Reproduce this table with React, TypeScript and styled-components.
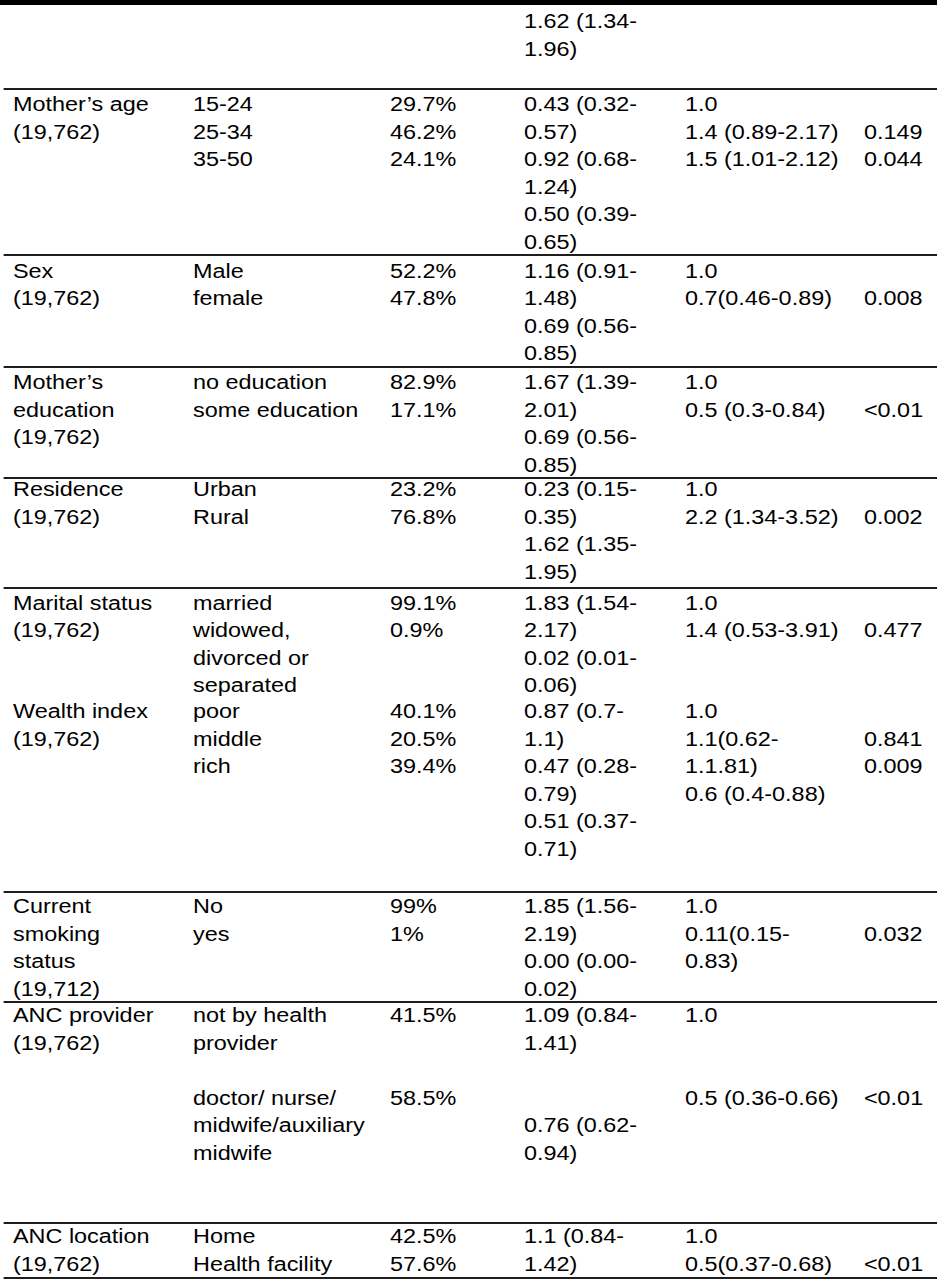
import React from "react";
import styled, { createGlobalStyle } from "styled-components";

const GlobalStyle = createGlobalStyle`
  html, body { margin: 0; padding: 0; background: #fff; }
  body {
    font-family: "Liberation Sans", Arial, Helvetica, sans-serif;
    color: #000;
  }
`;

/* The source table is a horizontally stretched scan: glyphs are wider than tall. */
const SCALE = 1.2;

const Page = styled.div`
  width: 937px;
  height: 1280px;
  overflow: hidden;
  background: #fff;
`;

const Table = styled.div`
  width: ${937 / SCALE}px;
  transform: scaleX(${SCALE});
  transform-origin: 0 0;
  border-top: 5px solid #000;
  font-size: 19.5px;
  line-height: 27.5px;
`;

const Row = styled.div<{ $h: number; $ruled: boolean }>`
  display: grid;
  grid-template-columns: 150px 164.17px 111.67px 134.17px 149.17px 1fr;
  box-sizing: border-box;
  height: ${(p) => p.$h}px;
  margin-left: 2.5px;
  padding-left: 8.33px;
  border-bottom: ${(p) => (p.$ruled ? "2px solid #1e1e1e" : "none")};
`;

const Cell = styled.div<{ $shift: number }>`
  margin-top: ${(p) => p.$shift}px;
  white-space: nowrap;
`;

const Line = styled.div`
  height: 27.5px;
`;

type RowData = {
  h: number;
  pad: number;
  ruled?: boolean;
  cols: string[][];
};

const rows: RowData[] = [
  { h: 85, pad: 3, cols: [[], [], [], ["1.62 (1.34-", "1.96)"], [], []] },
  {
    h: 166,
    pad: 1,
    cols: [
      ["Mother’s age", "(19,762)"],
      ["15-24", "25-34", "35-50"],
      ["29.7%", "46.2%", "24.1%"],
      ["0.43 (0.32-", "0.57)", "0.92 (0.68-", "1.24)", "0.50 (0.39-", "0.65)"],
      ["1.0", "1.4 (0.89-2.17)", "1.5 (1.01-2.12)"],
      ["", "0.149", "0.044"],
    ],
  },
  {
    h: 112,
    pad: 1.5,
    cols: [
      ["Sex", "(19,762)"],
      ["Male", "female"],
      ["52.2%", "47.8%"],
      ["1.16 (0.91-", "1.48)", "0.69 (0.56-", "0.85)"],
      ["1.0", "0.7(0.46-0.89)"],
      ["", "0.008"],
    ],
  },
  {
    h: 111,
    pad: 1,
    cols: [
      ["Mother’s", "education", "(19,762)"],
      ["no education", "some education"],
      ["82.9%", "17.1%"],
      ["1.67 (1.39-", "2.01)", "0.69 (0.56-", "0.85)"],
      ["1.0", "0.5 (0.3-0.84)"],
      ["", "<0.01"],
    ],
  },
  {
    h: 110,
    pad: -3,
    cols: [
      ["Residence", "(19,762)"],
      ["Urban", "Rural"],
      ["23.2%", "76.8%"],
      ["0.23 (0.15-", "0.35)", "1.62 (1.35-", "1.95)"],
      ["1.0", "2.2 (1.34-3.52)"],
      ["", "0.002"],
    ],
  },
  {
    h: 109,
    pad: 0.5,
    ruled: false,
    cols: [
      ["Marital status", "(19,762)"],
      ["married", "widowed,", "divorced or", "separated"],
      ["99.1%", "0.9%"],
      ["1.83 (1.54-", "2.17)", "0.02 (0.01-", "0.06)"],
      ["1.0", "1.4 (0.53-3.91)"],
      ["", "0.477"],
    ],
  },
  {
    h: 195,
    pad: 0,
    cols: [
      ["Wealth index", "(19,762)"],
      ["poor", "middle", "rich"],
      ["40.1%", "20.5%", "39.4%"],
      ["0.87 (0.7-", "1.1)", "0.47 (0.28-", "0.79)", "0.51 (0.37-", "0.71)"],
      ["1.0", "1.1(0.62-", "1.1.81)", "0.6 (0.4-0.88)"],
      ["", "0.841", "0.009"],
    ],
  },
  {
    h: 110,
    pad: 0,
    cols: [
      ["Current", "smoking", "status", "(19,712)"],
      ["No", "yes"],
      ["99%", "1%"],
      ["1.85 (1.56-", "2.19)", "0.00 (0.00-", "0.02)"],
      ["1.0", "0.11(0.15-", "0.83)"],
      ["", "0.032"],
    ],
  },
  {
    h: 221,
    pad: -1,
    cols: [
      ["ANC provider", "(19,762)"],
      ["not by health", "provider", "", "doctor/ nurse/", "midwife/auxiliary", "midwife"],
      ["41.5%", "", "", "58.5%"],
      ["1.09 (0.84-", "1.41)", "", "", "0.76 (0.62-", "0.94)"],
      ["1.0", "", "", "0.5 (0.36-0.66)"],
      ["", "", "", "<0.01"],
    ],
  },
  {
    h: 55,
    pad: -1,
    cols: [
      ["ANC location", "(19,762)"],
      ["Home", "Health facility"],
      ["42.5%", "57.6%"],
      ["1.1 (0.84-", "1.42)"],
      ["1.0", "0.5(0.37-0.68)"],
      ["", "<0.01"],
    ],
  },
];

export default function App() {
  return (
    <Page>
      <GlobalStyle />
      <Table>
        {rows.map((r, i) => (
          <Row key={i} $h={r.h} $ruled={r.ruled !== false}>
            {r.cols.map((lines, j) => (
              <Cell key={j} $shift={r.pad}>
                {lines.map((t, k) => (
                  <Line key={k}>{t === "" ? "\u00a0" : t}</Line>
                ))}
              </Cell>
            ))}
          </Row>
        ))}
      </Table>
    </Page>
  );
}
